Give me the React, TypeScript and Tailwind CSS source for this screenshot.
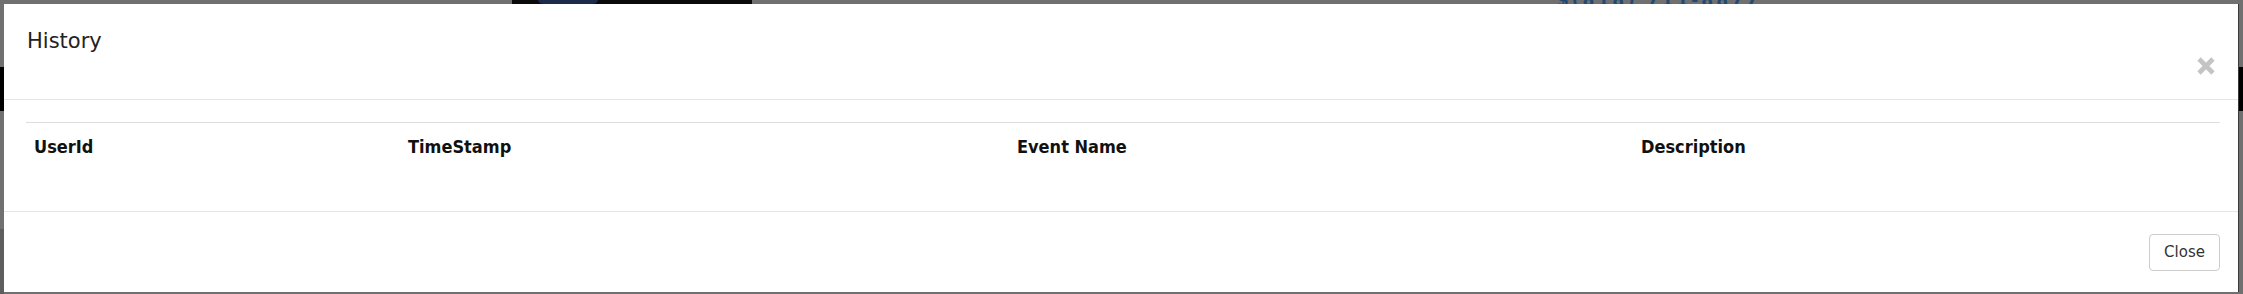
import React from "react";

export default function App() {
  const cols = [
    { label: "UserId", w: "w-[374px]" },
    { label: "TimeStamp", w: "w-[609px]" },
    { label: "Event Name", w: "w-[624px]" },
    { label: "Description", w: "flex-1" },
  ];
  return (
    <div className="relative w-[2243px] h-[294px] overflow-hidden bg-[#707070] pt-[4px] pl-[4px]">
      {/* backdrop content behind overlay */}
      <div className="absolute left-0 top-[67px] w-full h-[44px] bg-black" />
      <div className="absolute left-0 top-[229px] w-[4px] h-[65px] bg-[#5e5e5e]" />
      <div className="absolute left-[512px] top-0 w-[240px] h-[4px] bg-[#0a0a0a]" />
      <div className="absolute left-[538px] top-[-6px] w-[60px] h-[10px] rounded-full bg-[#1e2a4a]" />
      <div
        className="absolute left-[1557px] top-[-12px] text-[17px] font-bold text-[#1f4a75] tracking-[3px]"
        style={{ fontFamily: '"DejaVu Sans", sans-serif' }}
      >
        $(818) 711-8877
      </div>

      <div
        className="relative flex flex-col w-[2235px] h-[288px] bg-white border-r border-[#3a3a3a]"
        style={{ fontFamily: '"DejaVu Sans", "Liberation Sans", sans-serif' }}
      >
        {/* header */}
        <div className="flex justify-between h-[96px] border-b border-[#e5e5e5] pl-[23px] pr-[23px] shrink-0">
          <h4 className="text-[21px] leading-[24px] text-[#222] mt-[25px]">History</h4>
          <svg className="mt-[53px]" width="18" height="18" viewBox="0 0 18 18" aria-label="close">
            <path d="M2 2 L16 16 M16 2 L2 16" stroke="#c4c4c4" strokeWidth="4.6" strokeLinecap="butt" />
          </svg>
        </div>
        {/* body */}
        <div className="h-[111px] pt-[22px] pl-[22px] pr-[18px] shrink-0">
          <div className="flex border-t border-[#dddddd]">
            {cols.map((c) => (
              <div
                key={c.label}
                className={`${c.w} pl-[8px] pt-[12px] text-[18px] leading-[24px] font-bold text-[#111]`}
                style={{ fontFamily: '"DejaVu Sans Condensed", "DejaVu Sans", sans-serif', fontStretch: "condensed" }}
              >
                {c.label}
              </div>
            ))}
          </div>
        </div>
        {/* footer */}
        <div className="flex justify-end border-t border-[#e5e5e5] flex-1 pr-[18px] pt-[22px]">
          <button className="h-[37px] w-[71px] border border-[#cccccc] rounded-[4px] bg-white text-[15px] text-[#333]">
            Close
          </button>
        </div>
      </div>
    </div>
  );
}
